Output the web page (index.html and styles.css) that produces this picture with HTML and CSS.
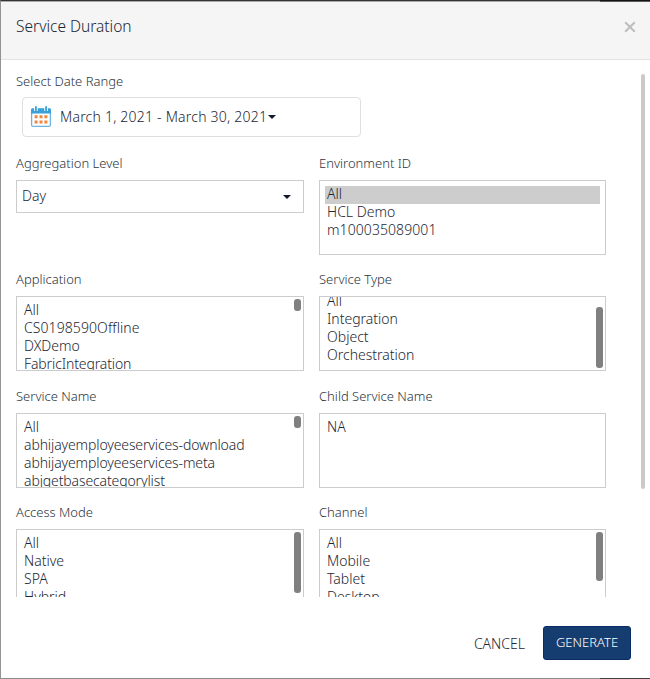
FILE: index.html
```html
<!DOCTYPE html>
<html lang="en">
<head>
<meta charset="utf-8">
<title>Service Duration</title>
<link rel="stylesheet" href="styles.css">
</head>
<body>
<section class="dialog">
  <header class="head">
    <h1 class="title">Service Duration</h1>
    <svg class="close" viewBox="0 0 12 12" width="12" height="12"><path d="M1.2 1.2l9.6 9.6M10.8 1.2l-9.6 9.6"/></svg>
  </header>
  <main class="content">
    <div class="label">Select Date Range</div>
    <div class="range">
      <svg class="cal" viewBox="0 0 22 22" width="22" height="22">
        <rect x="1.6" y="3" width="18.8" height="17.4" rx="1.5" fill="#fff" stroke="#6bb4e0" stroke-width="1.3"/>
        <path d="M1 3.6Q1 2.4 2.2 2.4H19.8Q21 2.4 21 3.6V7.6H1Z" fill="#3b9fd9"/>
        <path d="M5.9 1v4M16.1 1v4" stroke="#fff" stroke-width="3.6"/>
        <path d="M5.9 1v3.4M16.1 1v3.4" stroke="#3b9fd9" stroke-width="1.8" stroke-linecap="round"/>
        <path d="M4.6 9.2h3v3h-3zM9.5 9.2h3v3h-3zM14.4 9.2h3v3h-3zM4.6 14.4h3v3h-3zM9.5 14.4h3v3h-3zM14.4 14.4h3v3h-3z" fill="#f0853c"/>
      </svg>
      <span class="range-text">March 1, 2021 - March 30, 2021</span>
      <i class="caret"></i>
    </div>
    <div class="grid">
      <div class="field">
        <div class="label">Aggregation Level</div>
        <div class="select"><span>Day</span><i class="caret"></i></div>
      </div>
      <div class="field">
        <div class="label">Environment ID</div>
        <ul class="list"><li class="selected">All</li><li>HCL Demo</li><li class="digits">m100035089001</li></ul>
      </div>
      <div class="field">
        <div class="label">Application</div>
        <ul class="list"><li>All</li><li class="digits">CS0198590Offline</li><li>DXDemo</li><li class="tight">FabricIntegration</li><b class="thumb small"></b></ul>
      </div>
      <div class="field">
        <div class="label">Service Type</div>
        <ul class="list scrolled"><li>All</li><li>Integration</li><li>Object</li><li>Orchestration</li><b class="thumb end"></b></ul>
      </div>
      <div class="field">
        <div class="label">Service Name</div>
        <ul class="list"><li>All</li><li class="tight">abhijayemployeeservices-download</li><li class="tight">abhijayemployeeservices-meta</li><li class="tight">abjgetbasecategorylist</li><b class="thumb small"></b></ul>
      </div>
      <div class="field">
        <div class="label">Child Service Name</div>
        <ul class="list"><li>NA</li></ul>
      </div>
      <div class="field">
        <div class="label">Access Mode</div>
        <ul class="list"><li>All</li><li>Native</li><li>SPA</li><li>Hybrid</li><b class="thumb large"></b></ul>
      </div>
      <div class="field">
        <div class="label">Channel</div>
        <ul class="list"><li>All</li><li>Mobile</li><li>Tablet</li><li>Desktop</li><b class="thumb medium"></b></ul>
      </div>
    </div>
    <b class="page-thumb"></b>
  </main>
  <footer class="foot">
    <span class="cancel">CANCEL</span>
    <span class="generate">GENERATE</span>
  </footer>
</section>
</body>
</html>
```
FILE: styles.css
```css
* { box-sizing: border-box; }
body {
  margin: 0;
  width: 650px;
  height: 679px;
  overflow: hidden;
  font-family: "Noto Sans", "Open Sans", sans-serif;
  font-weight: 300;
  font-size: 14px;
  color: #1c2733;
  background: #fff;
}
.dialog {
  position: relative;
  display: flex;
  flex-direction: column;
  height: 679px;
  border-left: 1px solid #949494;
  border-top: 1px solid #353335;
  border-bottom: 1px solid #8c8c8c;
}
.dialog::before,
.dialog::after {
  content: "";
  position: absolute;
  right: 0;
  width: 50px;
}
.dialog::before { top: -1px; height: 2px; background: linear-gradient(#151315 50%, #5a595a 50%); }
.dialog::after { bottom: -1px; height: 1px; background: #414141; }
.head {
  display: flex;
  justify-content: space-between;
  align-items: flex-start;
  height: 59px;
  padding: 14px 14px 0 15px;
  background: #f5f5f5;
  border-top: 1px solid #aaa;
  border-bottom: 1px solid #e2e2e2;
}
.title {
  margin: 0;
  font-size: 15.5px;
  line-height: 20px;
  font-weight: 300;
}
.close { margin-top: 5px; fill: none; stroke: #bdbdbd; stroke-width: 2; }
.content {
  position: relative;
  height: 537px;
  padding: 14px 0 0 15px;
  overflow: hidden;
}
.label {
  height: 16px;
  font-size: 13px;
  line-height: 15px;
  color: #2a3440;
  white-space: nowrap;
}
.range {
  display: flex;
  align-items: center;
  width: 339px;
  height: 40px;
  margin: 7px 0 19px 6px;
  padding: 0 7px 2px;
  border: 1px solid #dfdfdf;
  border-radius: 4px;
}
.cal { margin: 2px 8px 0 0; }
.range-text { white-space: nowrap; letter-spacing: 0.22px; }
.caret {
  width: 0;
  height: 0;
  margin: 2px 0 0 1px;
  border: 4px solid transparent;
  border-top-color: #111a26;
  border-bottom-width: 0;
}
.grid {
  display: grid;
  grid-template-columns: 288px 287px;
  column-gap: 15px;
  grid-auto-rows: 116.4px;
}
.select {
  display: flex;
  align-items: center;
  justify-content: space-between;
  height: 33px;
  margin-top: 8px;
  padding: 0 12px 1px 5px;
  border: 1px solid #ccc;
}
.select span { margin-bottom: 2px; }
.list {
  position: relative;
  height: 75px;
  margin: 8px 0 0;
  padding: 5px 5px 0;
  list-style: none;
  border: 1px solid #ccc;
  overflow: hidden;
}
.list li {
  height: 18px;
  padding-left: 2px;
  line-height: 16px;
  white-space: nowrap;
}
.list .digits { letter-spacing: 0.08px; }
.list .tight { letter-spacing: -0.12px; }
.selected { background: #cdcdcd; }
.scrolled { padding-top: 0; }
.scrolled li { transform: translateY(-4px); }
.thumb {
  position: absolute;
  top: 2px;
  right: 2px;
  width: 7px;
  border-radius: 3px;
  background: #808080;
}
.small { height: 12px; }
.medium { height: 49px; }
.large { height: 61px; }
.end { top: 10px; height: 61px; }
.page-thumb {
  position: absolute;
  top: 14px;
  right: 5px;
  width: 4px;
  height: 415px;
  border-radius: 2px;
  background: #cacaca;
}
.foot {
  display: flex;
  justify-content: flex-end;
  gap: 18px;
  padding: 29px 19px 0 0;
}
.cancel { line-height: 36px; }
.generate {
  width: 88px;
  height: 34px;
  border: 1px solid #0a2c66;
  border-radius: 3px;
  background: #153d70;
  color: #fff;
  font-size: 13px;
  line-height: 31px;
  text-align: center;
}
```
